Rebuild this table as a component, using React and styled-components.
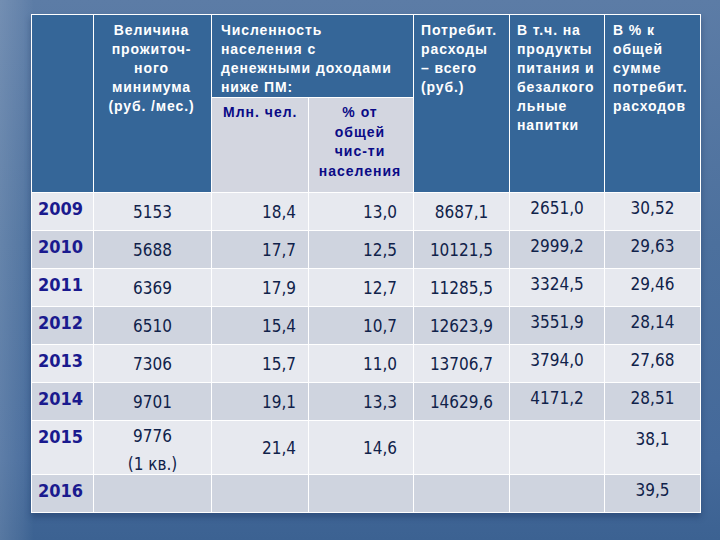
import styled, { createGlobalStyle } from "styled-components";

const GlobalStyle = createGlobalStyle`
  html, body {
    margin: 0;
    padding: 0;
  }
`;

const Slide = styled.div`
  width: 720px;
  height: 540px;
  box-sizing: border-box;
  padding: 14px 20px 0 31px;
  overflow: hidden;
  background:
    linear-gradient(90deg, rgba(255, 255, 255, 0.14) 0, rgba(255, 255, 255, 0.06) 22px, rgba(255, 255, 255, 0) 34px),
    linear-gradient(180deg, #5c7ca6 0%, #4c709d 45%, #44699a 85%, #3c6292 100%);
`;

const Table = styled.table`
  border-collapse: collapse;
  table-layout: fixed;
  width: 669px;
  box-shadow: 0 4px 6px rgba(20, 40, 80, 0.35);
`;

const Col = styled.col`
  width: ${(p) => p.$w}px;
`;

const HeadRow = styled.tr`
  height: ${(p) => p.$h}px;
`;

const HeadCell = styled.th`
  background: #356698;
  color: #ffffff;
  font-family: "Liberation Sans", Arial, sans-serif;
  font-weight: bold;
  font-size: 14px;
  line-height: 19px;
  letter-spacing: 0.9px;
  text-align: ${(p) => (p.$center ? "center" : "left")};
  vertical-align: top;
  padding: 6px 2px 0 ${(p) => p.$pl || 0}px;
  border: 1px solid #ffffff;
  white-space: nowrap;
  overflow: hidden;
`;

const SubCell = styled.th`
  background: #d3d6e0;
  color: #0a0a86;
  font-family: "Liberation Sans", Arial, sans-serif;
  font-weight: bold;
  font-size: 14px;
  line-height: 19.5px;
  letter-spacing: 1px;
  text-align: ${(p) => (p.$center ? "center" : "left")};
  vertical-align: top;
  padding: 5px 2px 0 ${(p) => p.$pl || 0}px;
  border: 1px solid #ffffff;
  white-space: nowrap;
`;

const Row = styled.tr`
  height: ${(p) => p.$h}px;
  background: ${(p) => (p.$alt ? "#cfd4df" : "#e7e9ef")};
`;

const Cell = styled.td`
  font-family: "DejaVu Sans Condensed", "DejaVu Sans", Tahoma, sans-serif;
  font-size: 17px;
  color: #10224a;
  text-align: ${(p) => p.$align || "center"};
  vertical-align: ${(p) => p.$valign || "middle"};
  padding: ${(p) => p.$pad || "0"};
  border: 1px solid #ffffff;
  white-space: nowrap;
`;

const YearCell = styled.td`
  font-family: "DejaVu Sans Condensed", "DejaVu Sans", Tahoma, sans-serif;
  font-weight: bold;
  font-size: 18px;
  color: #1a1a8e;
  text-align: left;
  vertical-align: top;
  padding: 5px 0 0 6px;
  border: 1px solid #ffffff;
`;

const Line = styled.span`
  display: block;
  margin-top: ${(p) => p.$mt || 0}px;
`;

const rows = [
  ["2009", "5153", "18,4", "13,0", "8687,1", "2651,0", "30,52"],
  ["2010", "5688", "17,7", "12,5", "10121,5", "2999,2", "29,63"],
  ["2011", "6369", "17,9", "12,7", "11285,5", "3324,5", "29,46"],
  ["2012", "6510", "15,4", "10,7", "12623,9", "3551,9", "28,14"],
  ["2013", "7306", "15,7", "11,0", "13706,7", "3794,0", "27,68"],
  ["2014", "9701", "19,1", "13,3", "14629,6", "4171,2", "28,51"],
  ["2015", ["9776", "(1 кв.)"], "21,4", "14,6", "", "", "38,1"],
  ["2016", "", "", "", "", "", "39,5"],
];

const App = () => {
  return (
    <Slide>
      <GlobalStyle />
      <Table>
        <colgroup>
          <Col $w={62} />
          <Col $w={118} />
          <Col $w={97} />
          <Col $w={105} />
          <Col $w={96} />
          <Col $w={95} />
          <Col $w={96} />
        </colgroup>
        <thead>
          <HeadRow $h={83}>
            <HeadCell rowSpan={2} />
            <HeadCell rowSpan={2} $center>
              Величина
              <br />
              прожиточ-
              <br />
              ного
              <br />
              минимума
              <br />
              (руб. /мес.)
            </HeadCell>
            <HeadCell colSpan={2} $pl={9}>
              Численность
              <br />
              населения с
              <br />
              денежными доходами
              <br />
              ниже ПМ:
            </HeadCell>
            <HeadCell rowSpan={2} $pl={7}>
              Потребит.
              <br />
              расходы
              <br />
              – всего
              <br />
              (руб.)
            </HeadCell>
            <HeadCell rowSpan={2} $pl={7}>
              В т.ч. на
              <br />
              продукты
              <br />
              питания и
              <br />
              безалкого
              <br />
              льные
              <br />
              напитки
            </HeadCell>
            <HeadCell rowSpan={2} $pl={8}>
              В % к
              <br />
              общей
              <br />
              сумме
              <br />
              потребит.
              <br />
              расходов
            </HeadCell>
          </HeadRow>
          <HeadRow $h={95}>
            <SubCell $pl={11}>Млн. чел.</SubCell>
            <SubCell $center>
              % от
              <br />
              общей
              <br />
              чис-ти
              <br />
              населения
            </SubCell>
          </HeadRow>
        </thead>
        <tbody>
          {rows.map((r, i) => {
            const tall = r[0] === "2015";
            return (
              <Row key={r[0]} $alt={i % 2 === 1} $h={tall ? 54 : 38}>
                <YearCell>{r[0]}</YearCell>
                {Array.isArray(r[1]) ? (
                  <Cell $valign="top" $pad="5px 0 0 0">
                    <Line>{r[1][0]}</Line>
                    <Line $mt={8}>{r[1][1]}</Line>
                  </Cell>
                ) : (
                  <Cell>{r[1]}</Cell>
                )}
                <Cell $align="right" $pad="0 12px 0 0">{r[2]}</Cell>
                <Cell $align="right" $pad="0 16px 0 0">{r[3]}</Cell>
                <Cell>{r[4]}</Cell>
                <Cell $valign="top" $pad="5px 0 0 0">{r[5]}</Cell>
                <Cell $valign="top" $pad={tall ? "8px 0 0 0" : "5px 0 0 0"}>{r[6]}</Cell>
              </Row>
            );
          })}
        </tbody>
      </Table>
    </Slide>
  );
};

export default App;
